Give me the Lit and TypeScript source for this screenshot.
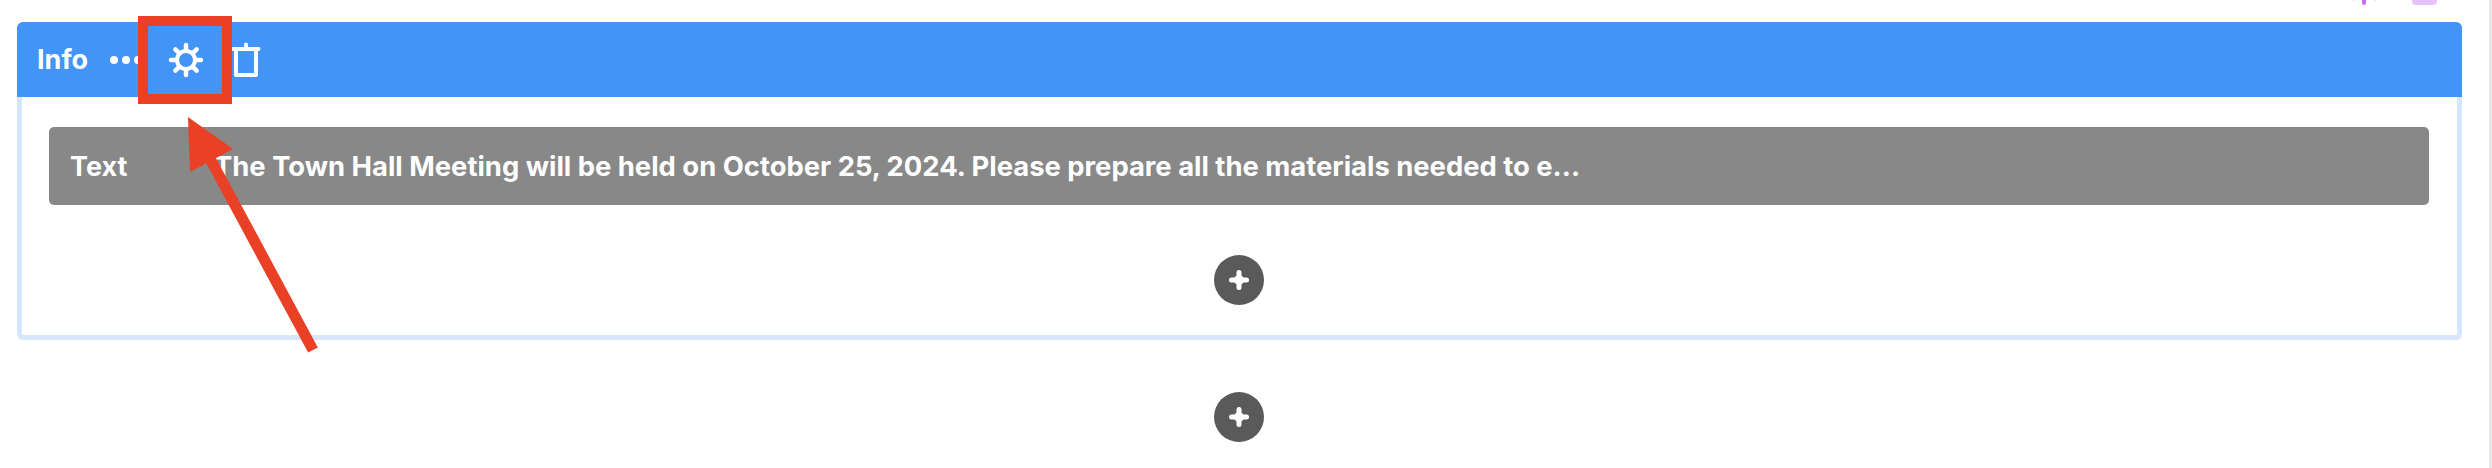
import { LitElement, html, css, svg } from "lit";
import { customElement } from "lit/decorators.js";

const plusIcon = svg`<path d="M25 17.5v15M17.5 25h15" fill="none" stroke="#fff" stroke-width="5" stroke-linecap="round"/><circle cx="25" cy="25" r="5" fill="#fff"/>`;

@customElement("add-button")
export class AddButton extends LitElement {
  static styles = css`
    :host {
      display: block;
      width: 50px;
      height: 50px;
    }
    svg {
      display: block;
    }
  `;

  render() {
    return html`<svg width="50" height="50" viewBox="0 0 50 50">
      <circle cx="25" cy="25" r="25" fill="#5a5a5a"></circle>
      ${plusIcon}
    </svg>`;
  }
}

@customElement("app-root")
export class AppRoot extends LitElement {
  static styles = css`
    :host {
      display: block;
      position: relative;
      height: 468px;
      overflow: hidden;
      background: #fff;
      font-family: Inter, "Liberation Sans", sans-serif;
      font-weight: 700;
      font-variant-ligatures: none;
      font-feature-settings: "calt" 0;
      color: #fff;
    }
    .page {
      padding: 22px 30px 0 17px;
    }
    .card {
      border: 5px solid #d6e6fb;
      border-top: 0;
      border-radius: 6px;
      height: 318px;
      box-sizing: border-box;
    }
    .head {
      display: flex;
      align-items: center;
      height: 75px;
      margin: 0 -5px;
      padding-left: 20px;
      background: #4294f7;
      border-radius: 6px 6px 0 0;
      font-size: 27px;
    }
    .title {
      width: 73px;
      flex: none;
    }
    .dots {
      display: flex;
      gap: 4px;
    }
    .dots i {
      width: 8px;
      height: 8px;
      border-radius: 50%;
      background: #fff;
    }
    .gear {
      margin-left: 26px;
    }
    .trash {
      margin-left: 27px;
    }
    .body {
      display: flex;
      flex-direction: column;
      align-items: center;
      padding: 30px 28px 0 27px;
    }
    .row {
      display: flex;
      align-items: center;
      align-self: stretch;
      height: 78px;
      padding-left: 21px;
      background: #888;
      border-radius: 5px;
      font-size: 27px;
      margin-bottom: 50px;
    }
    .label {
      width: 144px;
      flex: none;
    }
    .value {
      font-size: 27.4px;
    }
    .outer-add {
      display: flex;
      justify-content: center;
      padding: 52px 31px 0 17px;
    }
    .overlay {
      position: absolute;
      left: 0;
      top: 0;
    }
    .track {
      position: absolute;
      right: 0;
      top: 0;
      bottom: 0;
      width: 3px;
      background: #e6e6e6;
    }
  `;

  render() {
    return html`
      <div class="page">
        <div class="card">
          <div class="head">
            <span class="title">Info</span>
            <div class="dots"><i></i><i></i><i></i></div>
            <svg class="gear" width="36" height="36" viewBox="0 0 36 36" fill="none" stroke="#fff" stroke-linecap="round">
              <circle cx="18" cy="18" r="9" stroke-width="4"></circle>
              <path stroke-width="4.5" d="M18 3v4M18 29v4M3 18h4M29 18h4M7.4 7.4l3 3M25.6 25.6l3 3M7.4 28.6l3-3M25.6 10.4l3-3"></path>
            </svg>
            <svg class="trash" width="30" height="36" viewBox="0 0 30 36" fill="none" stroke="#fff" stroke-linecap="round" stroke-linejoin="round" stroke-width="4">
              <path d="M2.5 7h25M15 2.5V7M5 7v26h20V7"></path>
            </svg>
          </div>
          <div class="body">
            <div class="row">
              <span class="label">Text</span>
              <span class="value">The Town Hall Meeting will be held on October 25, 2024. Please prepare all the materials needed to e...</span>
            </div>
            <add-button></add-button>
          </div>
        </div>
      </div>
      <div class="outer-add"><add-button></add-button></div>

      <svg class="overlay" width="2492" height="468" viewBox="0 0 2492 468">
        <rect x="143" y="21" width="84" height="78" fill="none" stroke="#ea4025" stroke-width="10"></rect>
        <path d="M188 117L233 149L190 172Z" fill="#ea4025"></path>
        <path d="M208 155L313 350" stroke="#ea4025" stroke-width="11" fill="none"></path>
        <path d="M2353 0h2M2374 0h2" stroke="#f1dcfa" stroke-width="2"></path>
        <path d="M2364 0v3" stroke="#cf6cf2" stroke-width="4" stroke-linecap="round"></path>
        <path d="M2412 0h25v1a4 4 0 0 1-4 4h-17a4 4 0 0 1-4-4z" fill="#e8c1f9"></path>
      </svg>
      <div class="track"></div>
    `;
  }
}
